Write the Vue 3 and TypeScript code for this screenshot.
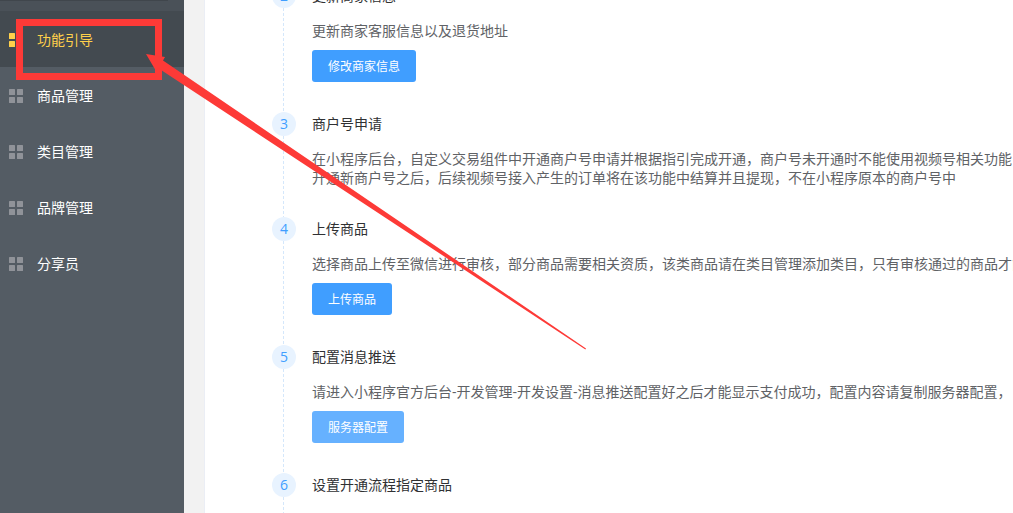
<script setup lang="ts">
interface MenuItem {
  label: string
  active?: boolean
}

interface Step {
  no: number
  title: string
  lines?: string[]
  action?: string
  soft?: boolean
}

const menu: MenuItem[] = [
  { label: '功能引导', active: true },
  { label: '商品管理' },
  { label: '类目管理' },
  { label: '品牌管理' },
  { label: '分享员' },
]

const steps: Step[] = [
  { no: 2, title: '更新商家信息', lines: ['更新商家客服信息以及退货地址'], action: '修改商家信息' },
  {
    no: 3,
    title: '商户号申请',
    lines: [
      '在小程序后台，自定义交易组件中开通商户号申请并根据指引完成开通，商户号未开通时不能使用视频号相关功能',
      '开通新商户号之后，后续视频号接入产生的订单将在该功能中结算并且提现，不在小程序原本的商户号中',
    ],
  },
  {
    no: 4,
    title: '上传商品',
    lines: ['选择商品上传至微信进行审核，部分商品需要相关资质，该类商品请在类目管理添加类目，只有审核通过的商品才能'],
    action: '上传商品',
  },
  {
    no: 5,
    title: '配置消息推送',
    lines: ['请进入小程序官方后台-开发管理-开发设置-消息推送配置好之后才能显示支付成功，配置内容请复制服务器配置，'],
    action: '服务器配置',
    soft: true,
  },
  { no: 6, title: '设置开通流程指定商品' },
]
</script>

<template>
  <div class="page">
    <aside class="sidebar">
      <div class="sidebar-head"></div>
      <nav>
        <a v-for="item in menu" :key="item.label" href="#" class="menu-item" :class="{ active: item.active }">
          <svg class="menu-icon" viewBox="0 -2 14 16" aria-hidden="true">
            <rect x="0" y="0" width="6" height="6" rx="0.5" />
            <rect x="8" y="0" width="6" height="6" rx="0.5" />
            <rect x="0" y="8" width="6" height="6" rx="0.5" />
            <rect x="8" y="8" width="6" height="6" rx="0.5" />
          </svg>
          <span>{{ item.label }}</span>
        </a>
      </nav>
    </aside>

    <main class="content">
      <ol class="steps">
        <li v-for="step in steps" :key="step.no" class="step">
          <div class="rail">
            <span class="badge">{{ step.no }}</span>
            <span class="dash"></span>
          </div>
          <div class="body">
            <h3>{{ step.title }}</h3>
            <div v-if="step.lines" class="desc">
              <p v-for="line in step.lines" :key="line">{{ line }}</p>
            </div>
            <button v-if="step.action" type="button" :class="{ soft: step.soft }">{{ step.action }}</button>
          </div>
        </li>
      </ol>
    </main>

    <svg class="annotation" width="600" height="360" viewBox="0 0 600 360" aria-hidden="true">
      <rect x="19.5" y="22.5" width="139" height="54" fill="none" stroke="#fd3a37" stroke-width="7" />
      <path d="M146 54L165 57L163 60.5L586 348.4L585.4 349.4L158 68L156 71Z" fill="#fd3a37" />
    </svg>
  </div>
</template>

<style>
body {
  margin: 0;
}
</style>

<style scoped>
.page {
  position: relative;
  display: flex;
  height: 100vh;
  overflow: hidden;
  background: #f2f2f2;
  font-family: "Open Sans", "Noto Sans CJK SC", sans-serif;
  font-size: 14px;
}

.sidebar {
  flex: 0 0 184px;
  background: #545c64;
}

.sidebar-head {
  height: 11px;
  background: #4a5158;
}

.sidebar-head::before {
  content: "";
  display: block;
  height: 1px;
  margin-right: 16px;
  background: #40464c;
}

.menu-item {
  display: flex;
  align-items: center;
  gap: 14px;
  height: 56px;
  padding-left: 9px;
  color: #fff;
  text-decoration: none;
}

.menu-item.active {
  background: #434a50;
  color: #ffd04b;
}

.menu-icon {
  width: 14px;
  height: 16px;
  fill: #909399;
}

.active .menu-icon {
  fill: #ffd04b;
}

.content {
  flex: 1;
  min-width: 0;
  margin-left: 20px;
  border-left: 1px solid #ebeef5;
  background: #fff;
  overflow: hidden;
}

.steps {
  margin: -16px 0 0;
  padding: 0 0 0 67px;
  list-style: none;
}

.step {
  display: flex;
  gap: 16px;
}

.rail {
  flex: 0 0 24px;
  display: flex;
  flex-direction: column;
  align-items: center;
}

.badge {
  width: 24px;
  height: 24px;
  border-radius: 50%;
  background: #e8f3ff;
  color: #409eff;
  line-height: 24px;
  text-align: center;
}

.dash {
  flex: 1;
  width: 1px;
  margin-right: 1px;
  background: repeating-linear-gradient(#d4e7fb 0 3px, #fff 3px 5px);
}

.body {
  min-width: 0;
  padding-bottom: 30px;
  white-space: nowrap;
}

h3 {
  margin: 0;
  color: #303133;
  font-size: 14px;
  font-weight: 400;
  line-height: 24px;
}

.desc {
  margin-top: 13px;
  color: #606266;
}

.desc p {
  margin: 0;
  line-height: 19px;
}

button {
  display: block;
  height: 32px;
  margin-top: 10px;
  padding: 0 16px;
  border: 0;
  border-radius: 3px;
  background: #409eff;
  color: #fff;
  font-family: inherit;
  font-size: 12px;
}

button.soft {
  background: #66b1ff;
}

.annotation {
  position: absolute;
  top: 0;
  left: 0;
  pointer-events: none;
}
</style>
